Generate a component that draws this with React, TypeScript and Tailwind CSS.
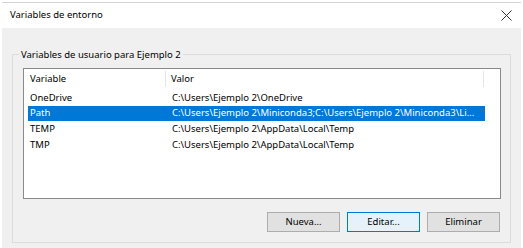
import React from "react";

const rows = [
    { name: "OneDrive", value: "C:\\Users\\Ejemplo 2\\OneDrive" },
    { name: "Path", value: "C:\\Users\\Ejemplo 2\\Miniconda3;C:\\Users\\Ejemplo 2\\Miniconda3\\Li...", selected: true },
    { name: "TEMP", value: "C:\\Users\\Ejemplo 2\\AppData\\Local\\Temp" },
    { name: "TMP", value: "C:\\Users\\Ejemplo 2\\AppData\\Local\\Temp" },
];

export default function App() {
    return (
        <div
            className="w-[523px] h-[248px] bg-white overflow-hidden text-[9.5px] text-black"
            style={{ fontFamily: '"Segoe UI", "Noto Sans", sans-serif' }}
        >
            <div className="ml-[2px] mt-[2px] w-[519px] h-[246px] border-t border-[#d4d4d4] flex flex-col">
                {/* title bar */}
                <div className="h-[25px] bg-white flex items-center justify-between pl-[8px] pr-[9px] pb-[1px]">
                    <span className="leading-none">Variables de entorno</span>
                    <svg width="11" height="11" viewBox="0 0 11 11" className="text-[#333]">
                        <path d="M0.5 0.5 L10.5 10.5 M10.5 0.5 L0.5 10.5" stroke="currentColor" strokeWidth="1" />
                    </svg>
                </div>

                {/* body */}
                <div className="flex-1 bg-[#f0f0f0] pl-[10px] pt-[26px]">
                    <div className="relative w-[499px] h-[189px] border border-[#dcdcdc] pt-[13px] pl-[10px]">
                        <span className="absolute left-[6px] -top-[7px] px-[2px] bg-[#f0f0f0] leading-[13px]">
                            Variables de usuario para Ejemplo 2
                        </span>

                        {/* list */}
                        <div className="w-[478px] h-[131px] border border-[#8a8a8a] bg-white">
                            <div className="flex h-[20px] items-center">
                                <div className="w-[142px] h-full flex items-center justify-between pl-[6px]">
                                    <span>Variable</span>
                                    <span className="w-px h-[16px] bg-[#e5e5e5]" />
                                </div>
                                <div className="w-[318px] h-full flex items-center justify-between pl-[5px]">
                                    <span>Valor</span>
                                    <span className="w-px h-[16px] bg-[#e5e5e5]" />
                                </div>
                            </div>
                            <div className="pt-[1px]">
                                {rows.map((r, i) => (
                                    <div
                                        key={i}
                                        className={
                                            r.selected
                                                ? "ml-[4px] w-[457px] h-[15.7px] flex items-center bg-[#0078d7] text-white"
                                                : "ml-[4px] w-[457px] h-[15.7px] flex items-center"
                                        }
                                    >
                                        <div className="w-[143px] pl-[2px] whitespace-nowrap">{r.name}</div>
                                        <div className="pl-[1px] whitespace-nowrap">{r.value}</div>
                                    </div>
                                ))}
                            </div>
                        </div>

                        {/* buttons */}
                        <div className="flex justify-end gap-[7px] mt-[13px] w-[477px]">
                            <button className="w-[73px] h-[20px] bg-[#e1e1e1] border border-[#adadad]">Nueva...</button>
                            <button className="w-[73px] h-[20px] bg-[#e5f1fb] border border-[#0078d7]">Editar...</button>
                            <button className="w-[73px] h-[20px] bg-[#e1e1e1] border border-[#adadad]">Eliminar</button>
                        </div>
                    </div>
                </div>
            </div>
        </div>
    );
}
